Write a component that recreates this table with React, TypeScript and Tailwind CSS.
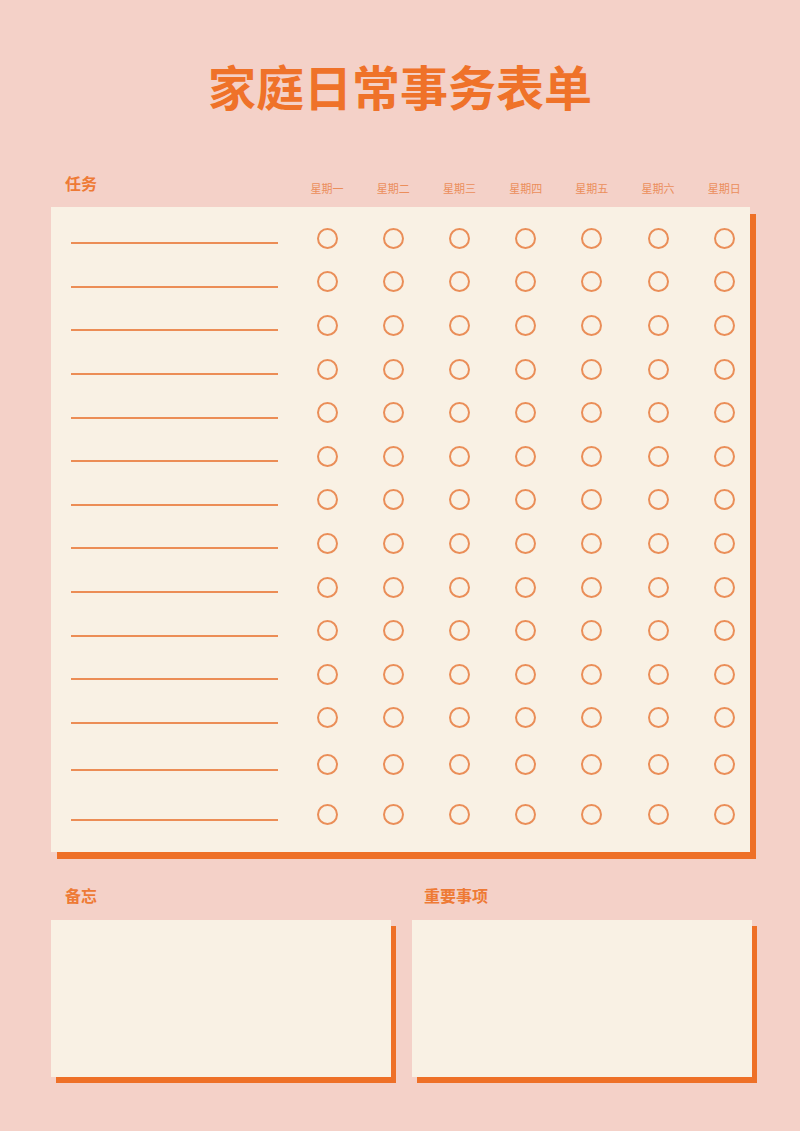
const days = ['星期一', '星期二', '星期三', '星期四', '星期五', '星期六', '星期日'];

// row heights measured from the sheet; the last two rows are a little taller
const rows = [
  'h-[44px]', 'h-[43px]', 'h-[44px]', 'h-[44px]', 'h-[43px]', 'h-[44px]',
  'h-[43px]', 'h-[44px]', 'h-[44px]', 'h-[43px]', 'h-[44px]', 'h-[43px]',
  'h-[51px]', 'h-[49px]',
];

const font = { fontFamily: '"Noto Sans CJK SC", "Noto Sans", sans-serif' };

function TaskRow({ h }: { h: string }) {
  return (
    <div className={`grid grid-cols-[243px_repeat(7,66.2px)] items-center ${h}`}>
      <div className="pl-[20px] pt-[10px]">
        <div className="w-[207px] h-[2px] bg-[#ec8d55]" />
      </div>
      {days.map((d) => (
        <div key={d} className="flex justify-center">
          <div className="w-[21px] h-[21px] rounded-full border-2 border-[#ea8e58]" />
        </div>
      ))}
    </div>
  );
}

export default function App() {
  return (
    <div className="w-[800px] min-h-[1131px] bg-[#f4d1c8] overflow-hidden" style={font}>
      {/* Title */}
      <h1 className="pt-[61px] text-center text-[48px] leading-[48px] font-bold text-[#ef7229]">
        家庭日常事务表单
      </h1>

      {/* Column headers */}
      <div className="mt-[61px] ml-[51px] h-[37px] grid grid-cols-[243px_repeat(7,66.2px)] items-start">
        <div className="pl-[14px] mt-[5px] text-[16px] leading-[16px] font-bold text-[#ee7a35]">任务</div>
        {days.map((d) => (
          <div key={d} className="mt-[13px] text-center text-[11px] leading-[11px] text-[#eb8e5b]">
            {d}
          </div>
        ))}
      </div>

      {/* Weekly table */}
      <div className="ml-[51px] w-[699px] h-[645px] bg-[#f9f1e4] shadow-[6px_7px_0_#ee7027] pt-[9px]">
        {rows.map((h, i) => (
          <TaskRow key={i} h={h} />
        ))}
      </div>

      {/* Notes */}
      <div className="mt-[28px] ml-[51px] w-[701px] grid grid-cols-2 gap-[21px]">
        <div>
          <div className="pl-[14px] h-[40px] pt-[7px] text-[16px] leading-[16px] font-bold text-[#ee7a35]">备忘</div>
          <div className="h-[157px] bg-[#f9f1e4] shadow-[5px_6px_0_#ee7027]" />
        </div>
        <div>
          <div className="pl-[12px] h-[40px] pt-[7px] text-[16px] leading-[16px] font-bold text-[#ee7a35]">重要事项</div>
          <div className="h-[157px] bg-[#f9f1e4] shadow-[5px_6px_0_#ee7027]" />
        </div>
      </div>
    </div>
  );
}
